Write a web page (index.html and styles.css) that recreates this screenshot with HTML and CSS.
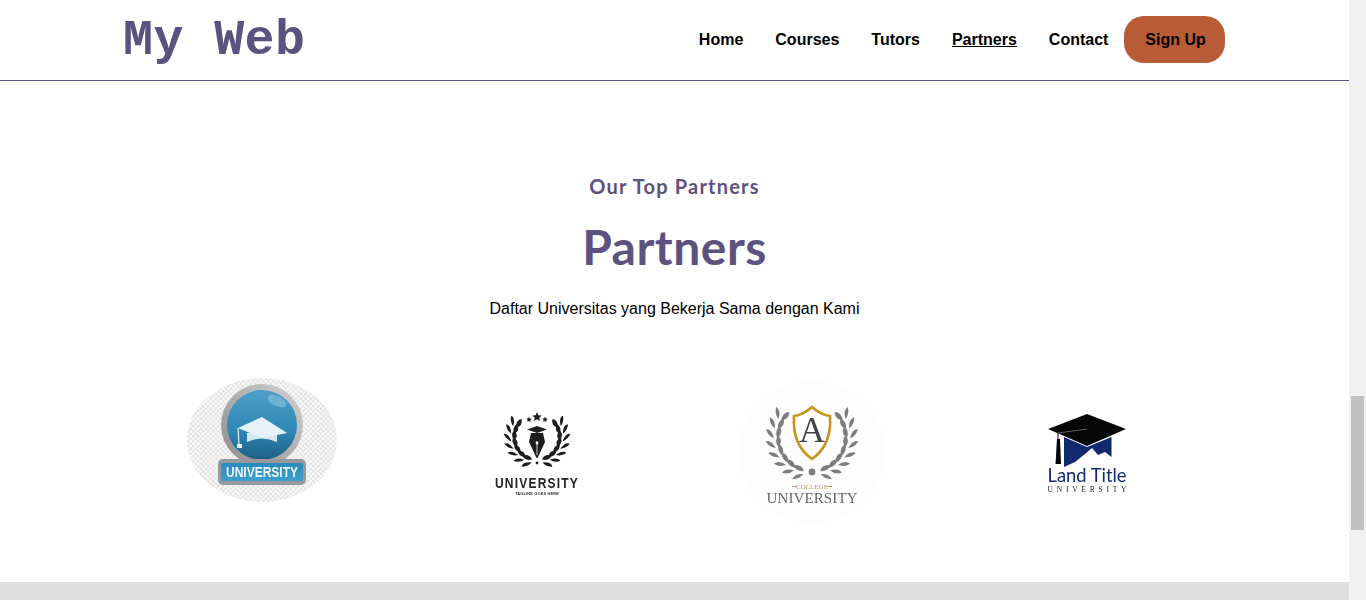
FILE: index.html

```html
<!DOCTYPE html>
<html>
<head>
    <title>Partners</title>
    <link rel="stylesheet" href="styles.css">
</head>
<body>
    <div class="page">
        <div class="header">
            <div class="logo">My Web</div>
            <div class="nav">
                <a>Home</a>
                <a>Courses</a>
                <a>Tutors</a>
                <a class="active">Partners</a>
                <a>Contact</a>
                <button class="signup">Sign Up</button>
            </div>
        </div>

        <div class="partners">
            <h3>Our Top Partners</h3>
            <h1>Partners</h1>
            <p>Daftar Universitas yang Bekerja Sama dengan Kami</p>

            <div class="partner-list">
                <div class="partner">
                    <svg class="partner-logo" viewBox="0 0 150 150">
                        <defs>
                            <pattern id="check" width="5" height="5" patternUnits="userSpaceOnUse">
                                <rect width="5" height="5" fill="#f8f8f8"/>
                                <rect width="2.5" height="2.5" fill="#e4e4e4"/>
                                <rect x="2.5" y="2.5" width="2.5" height="2.5" fill="#e4e4e4"/>
                            </pattern>
                            <linearGradient id="ball" x1="0" y1="0" x2="0" y2="1">
                                <stop offset="0" stop-color="#4f9fc9"/>
                                <stop offset="0.6" stop-color="#2f86b4"/>
                                <stop offset="1" stop-color="#1c5f82"/>
                            </linearGradient>
                            <linearGradient id="ring" x1="1" y1="0" x2="0" y2="1">
                                <stop offset="0" stop-color="#d2d2d2"/>
                                <stop offset="1" stop-color="#8c8c8c"/>
                            </linearGradient>
                            <linearGradient id="badge" x1="0" y1="0" x2="0" y2="1">
                                <stop offset="0" stop-color="#2a8abb"/>
                                <stop offset="1" stop-color="#3f9fcc"/>
                            </linearGradient>
                        </defs>
                        <ellipse cx="75" cy="65" rx="75" ry="62" fill="url(#check)"/>
                        <circle cx="75" cy="50" r="41" fill="url(#ring)"/>
                        <circle cx="75" cy="50" r="35" fill="url(#ball)"/>
                        <ellipse cx="90" cy="26" rx="10" ry="5" fill="#6fb3d4" transform="rotate(25 90 26)"/>
                        <path d="M60 58 L90 58 L90 67 Q75 60 60 67 Z" fill="#d5e9f3"/>
                        <path d="M75 42 L100 58 L75 63 L51 53 Z" fill="#e6f2f8"/>
                        <path d="M51 53 L52 70" stroke="#e6f2f8" stroke-width="1.2" fill="none"/>
                        <rect x="50" y="69" width="5" height="4" fill="#e6f2f8"/>
                        <rect x="31" y="84" width="88" height="26" rx="5" fill="#97999c"/>
                        <rect x="34" y="88" width="82" height="18" rx="2" fill="url(#badge)"/>
                        <text class="badge-text" x="75" y="102" text-anchor="middle" textLength="72" lengthAdjust="spacingAndGlyphs">UNIVERSITY</text>
                    </svg>
                </div>

                <div class="partner">
                    <svg class="partner-logo" viewBox="0 0 150 150">
                        <defs>
                            <g id="leaf-dark">
                                <path d="M74 85 Q70 79 64 83 Q67 88 74 85 Z"/>
                                <path d="M74 88 Q71 93 65 94 Q65 89 74 88 Z"/>
                            </g>
                            <g id="branch-dark">
                                <use href="#leaf-dark" transform="rotate(10 75 62)"/>
                                <use href="#leaf-dark" transform="rotate(27 75 62)"/>
                                <use href="#leaf-dark" transform="rotate(44 75 62)"/>
                                <use href="#leaf-dark" transform="rotate(61 75 62)"/>
                                <use href="#leaf-dark" transform="rotate(78 75 62)"/>
                                <use href="#leaf-dark" transform="rotate(95 75 62)"/>
                                <use href="#leaf-dark" transform="rotate(112 75 62)"/>
                            </g>
                        </defs>
                        <g fill="#1d1d1d">
                            <use href="#branch-dark"/>
                            <use href="#branch-dark" transform="matrix(-1 0 0 1 150 0)"/>
                            <circle cx="75" cy="88" r="1.4"/>
                            <path d="M75 37 L76.4 40.2 L79.8 40.5 L77.2 42.7 L78 46 L75 44.3 L72 46 L72.8 42.7 L70.2 40.5 L73.6 40.2 Z"/>
                            <path d="M67 41.5 L67.8 43.4 L69.8 43.6 L68.3 44.9 L68.8 46.9 L67 45.9 L65.2 46.9 L65.7 44.9 L64.2 43.6 L66.2 43.4 Z"/>
                            <path d="M83 41.5 L83.8 43.4 L85.8 43.6 L84.3 44.9 L84.8 46.9 L83 45.9 L81.2 46.9 L81.7 44.9 L80.2 43.6 L82.2 43.4 Z"/>
                            <path d="M65 54.5 L75 51 L85 54.5 L75 58 Z"/>
                            <path d="M69 58 L81 58 L83 67 L75.5 83 L74.5 83 L67 67 Z"/>
                        </g>
                        <path d="M75 66 L75 80" stroke="#fff" stroke-width="0.8"/>
                        <circle cx="75" cy="68" r="1.4" fill="#fff"/>
                        <text class="dark-name" x="75" y="113" text-anchor="middle" textLength="84" lengthAdjust="spacingAndGlyphs">UNIVERSITY</text>
                        <text class="dark-tag" x="75" y="120" text-anchor="middle" textLength="44" lengthAdjust="spacing">TAGLINE GOES HERE</text>
                    </svg>
                </div>

                <div class="partner">
                    <svg class="partner-logo" viewBox="0 0 150 150">
                        <defs>
                            <g id="leaf-grey">
                                <path d="M73 97 Q69 90 62 93 Q65 99 73 97 Z"/>
                                <path d="M73 100 Q70 106 63 107 Q64 101 73 100 Z"/>
                            </g>
                            <g id="branch-grey">
                                <use href="#leaf-grey" transform="rotate(10 75 62)"/>
                                <use href="#leaf-grey" transform="rotate(25 75 62)"/>
                                <use href="#leaf-grey" transform="rotate(40 75 62)"/>
                                <use href="#leaf-grey" transform="rotate(55 75 62)"/>
                                <use href="#leaf-grey" transform="rotate(70 75 62)"/>
                                <use href="#leaf-grey" transform="rotate(85 75 62)"/>
                                <use href="#leaf-grey" transform="rotate(100 75 62)"/>
                                <use href="#leaf-grey" transform="rotate(115 75 62)"/>
                            </g>
                        </defs>
                        <ellipse cx="75" cy="77" rx="74" ry="71" fill="#fdfdfd"/>
                        <g fill="#7d7d7d">
                            <use href="#branch-grey"/>
                            <use href="#branch-grey" transform="matrix(-1 0 0 1 150 0)"/>
                            <circle cx="75" cy="97" r="3.4"/>
                        </g>
                        <path d="M75 32 Q84 40 93 41 Q95 70 75 84 Q55 70 57 41 Q66 40 75 32 Z" fill="#fff" stroke="#c8941f" stroke-width="2.6"/>
                        <text class="crest-letter" x="75" y="67" text-anchor="middle">A</text>
                        <text class="crest-college" x="75" y="114" text-anchor="middle">COLLEGE</text>
                        <path d="M55 111.5 H60 M90 111.5 H95" stroke="#b89b5a" stroke-width="1"/>
                        <text class="crest-name" x="75" y="128" text-anchor="middle" textLength="91" lengthAdjust="spacing">UNIVERSITY</text>
                    </svg>
                </div>

                <div class="partner">
                    <svg class="partner-logo" viewBox="0 0 150 150">
                        <path d="M52 62 L75 72 L99.5 62 L99.5 82 L93 77 L86 80 L80 73 L73 79 L63 87 L52 92 Z" fill="#12296f"/>
                        <path d="M36 54 L75 39 L114 54 L75 71 Z" fill="#050505"/>
                        <path d="M46 58 L75 54" stroke="#8a8a8a" stroke-width="0.7" fill="none"/>
                        <path d="M46 58 V66" stroke="#050505" stroke-width="1"/>
                        <path d="M45 64 H48 L49 89 H43.5 Z" fill="#050505"/>
                        <text class="land-title" x="75" y="106.5" text-anchor="middle" textLength="79" lengthAdjust="spacingAndGlyphs">Land Title</text>
                        <text class="land-sub" x="75" y="116.5" text-anchor="middle" textLength="79" lengthAdjust="spacing">UNIVERSITY</text>
                    </svg>
                </div>
            </div>
        </div>

        <div class="footer"></div>
    </div>

    <div class="scrollbar">
        <div class="scrollbar-thumb"></div>
    </div>
</body>
</html>
```

FILE: styles.css

```css
html, body {
    height: 600px;
    margin: 0;
    overflow: hidden;
}

body {
    display: flex;
    font-family: "Liberation Sans", Arial, sans-serif;
    background-color: #fff;
    color: #000;
}

.page {
    flex: 1;
    display: flex;
    flex-direction: column;
    min-width: 0;
}

.header {
    height: 80px;
    border-bottom: 1px solid #5c527f;
    padding: 0 124px 0 123px;
    display: flex;
    justify-content: space-between;
    align-items: center;
}

.logo {
    font-family: "Liberation Mono", "Courier New", monospace;
    font-weight: bold;
    font-size: 50px;
    letter-spacing: 0.4px;
    color: #5c527f;
}

.nav {
    display: flex;
    align-items: center;
    font-size: 16px;
    font-weight: bold;
}

.nav a {
    margin-right: 32px;
}

.nav a:nth-child(5) {
    margin-right: 15.6px;
}

.nav a.active {
    text-decoration: underline;
}

.signup {
    width: 101px;
    height: 47px;
    margin-top: -1px;
    padding: 0 0 0 2px;
    border: none;
    border-radius: 20px;
    background-color: #b85c38;
    color: #000;
    font-family: inherit;
    font-size: 16px;
    font-weight: bold;
}

.partners {
    padding: 93px 0 57px;
    text-align: center;
}

.partners h3 {
    margin: 0;
    font-family: "Lato", sans-serif;
    font-size: 20px;
    line-height: 24px;
    font-weight: bold;
    letter-spacing: 1.2px;
    color: #5c527f;
}

.partners h1 {
    margin: 22px 0 0;
    font-family: "Lato", sans-serif;
    font-size: 48px;
    line-height: 54px;
    font-weight: bold;
    letter-spacing: 0.5px;
    color: #5c527f;
}

.partners p {
    margin: 26px 0 0;
    font-size: 16px;
    line-height: 18px;
}

.partner-list {
    width: 1100px;
    margin: 57px auto 0;
    display: grid;
    grid-template-columns: repeat(4, 1fr);
}

.partner {
    display: flex;
    justify-content: center;
}

.partner-logo {
    display: block;
    width: 150px;
    height: 150px;
    filter: blur(0.35px);
}

.badge-text {
    font-family: "Liberation Sans", sans-serif;
    font-size: 15px;
    font-weight: bold;
    fill: #eef7fb;
}

.dark-name {
    font-family: "Liberation Sans", sans-serif;
    font-size: 15px;
    font-weight: bold;
    letter-spacing: 1.5px;
    fill: #222;
}

.dark-tag {
    font-family: "Liberation Sans", sans-serif;
    font-size: 4px;
    font-weight: bold;
    fill: #333;
}

.crest-letter {
    font-family: "Liberation Serif", serif;
    font-size: 36px;
    fill: #444;
}

.crest-college {
    font-family: "Liberation Serif", serif;
    font-size: 7px;
    fill: #b89b5a;
}

.crest-name {
    font-family: "Liberation Serif", serif;
    font-size: 15px;
    fill: #666;
}

.land-title {
    font-family: "Lato", sans-serif;
    font-size: 20px;
    fill: #12296f;
}

.land-sub {
    font-family: "Liberation Serif", serif;
    font-size: 7.5px;
    fill: #222;
}

.footer {
    flex: 1;
    background-color: #dedede;
}

.scrollbar {
    width: 17px;
    flex-shrink: 0;
    padding-top: 396px;
    box-sizing: border-box;
    background-color: #f1f1f1;
}

.scrollbar-thumb {
    height: 134px;
    margin: 0 2px;
    background-color: #c1c1c1;
}
```
